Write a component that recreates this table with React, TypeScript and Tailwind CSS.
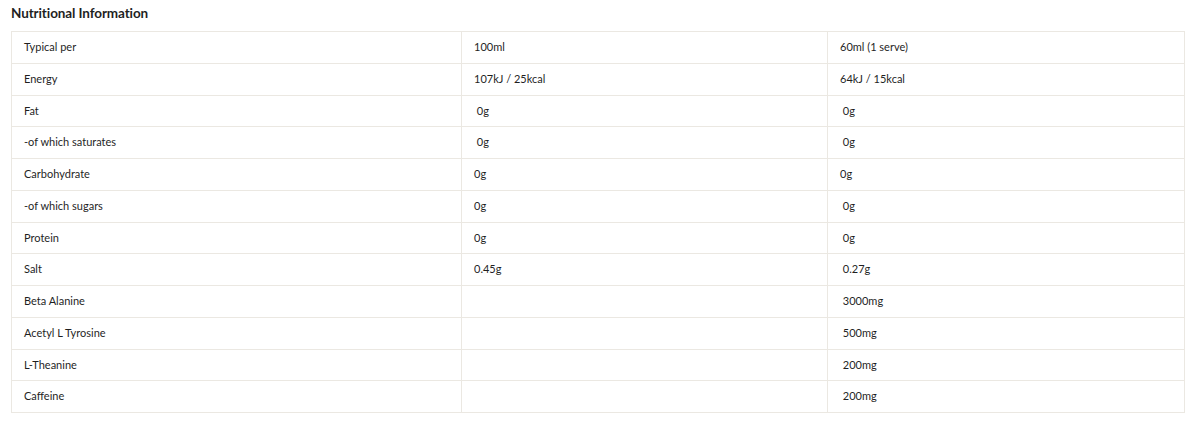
const rows: [string, string, string][] = [
  ["Typical per", "100ml", "60ml (1 serve)"],
  ["Energy", "107kJ / 25kcal", "64kJ / 15kcal"],
  ["Fat", "\u00a00g", "\u00a00g"],
  ["-of which saturates", "\u00a00g", "\u00a00g"],
  ["Carbohydrate", "0g", "0g"],
  ["-of which sugars", "0g", "\u00a00g"],
  ["Protein", "0g", "\u00a00g"],
  ["Salt", "0.45g", "\u00a00.27g"],
  ["Beta Alanine", "", "\u00a03000mg"],
  ["Acetyl L Tyrosine", "", "\u00a0500mg"],
  ["L-Theanine", "", "\u00a0200mg"],
  ["Caffeine", "", "\u00a0200mg"],
];

export default function App() {
  return (
    <div className="min-h-[425px] bg-white pl-[11px] pt-[4px] font-['Lato','Liberation_Sans',sans-serif] text-[#1f1f1f]">
      <h2 className="text-[13.5px] leading-[18px] font-bold tracking-[-0.1px]">Nutritional Information</h2>
      <table className="mt-[9px] w-[1174px] table-fixed border-collapse border border-[#ebe8e2] text-[11px]">
        <colgroup>
          <col className="w-[450px]" />
          <col className="w-[366px]" />
          <col />
        </colgroup>
        <tbody>
          {rows.map(([label, per100, perServe]) => (
            <tr key={label} className="h-[31.75px]">
              <td className="border border-[#ebe8e2] px-[12px] align-middle">{label}</td>
              <td className="border border-[#ebe8e2] px-[12px] align-middle">{per100}</td>
              <td className="border border-[#ebe8e2] px-[12px] align-middle">{perServe}</td>
            </tr>
          ))}
        </tbody>
      </table>
    </div>
  );
}
